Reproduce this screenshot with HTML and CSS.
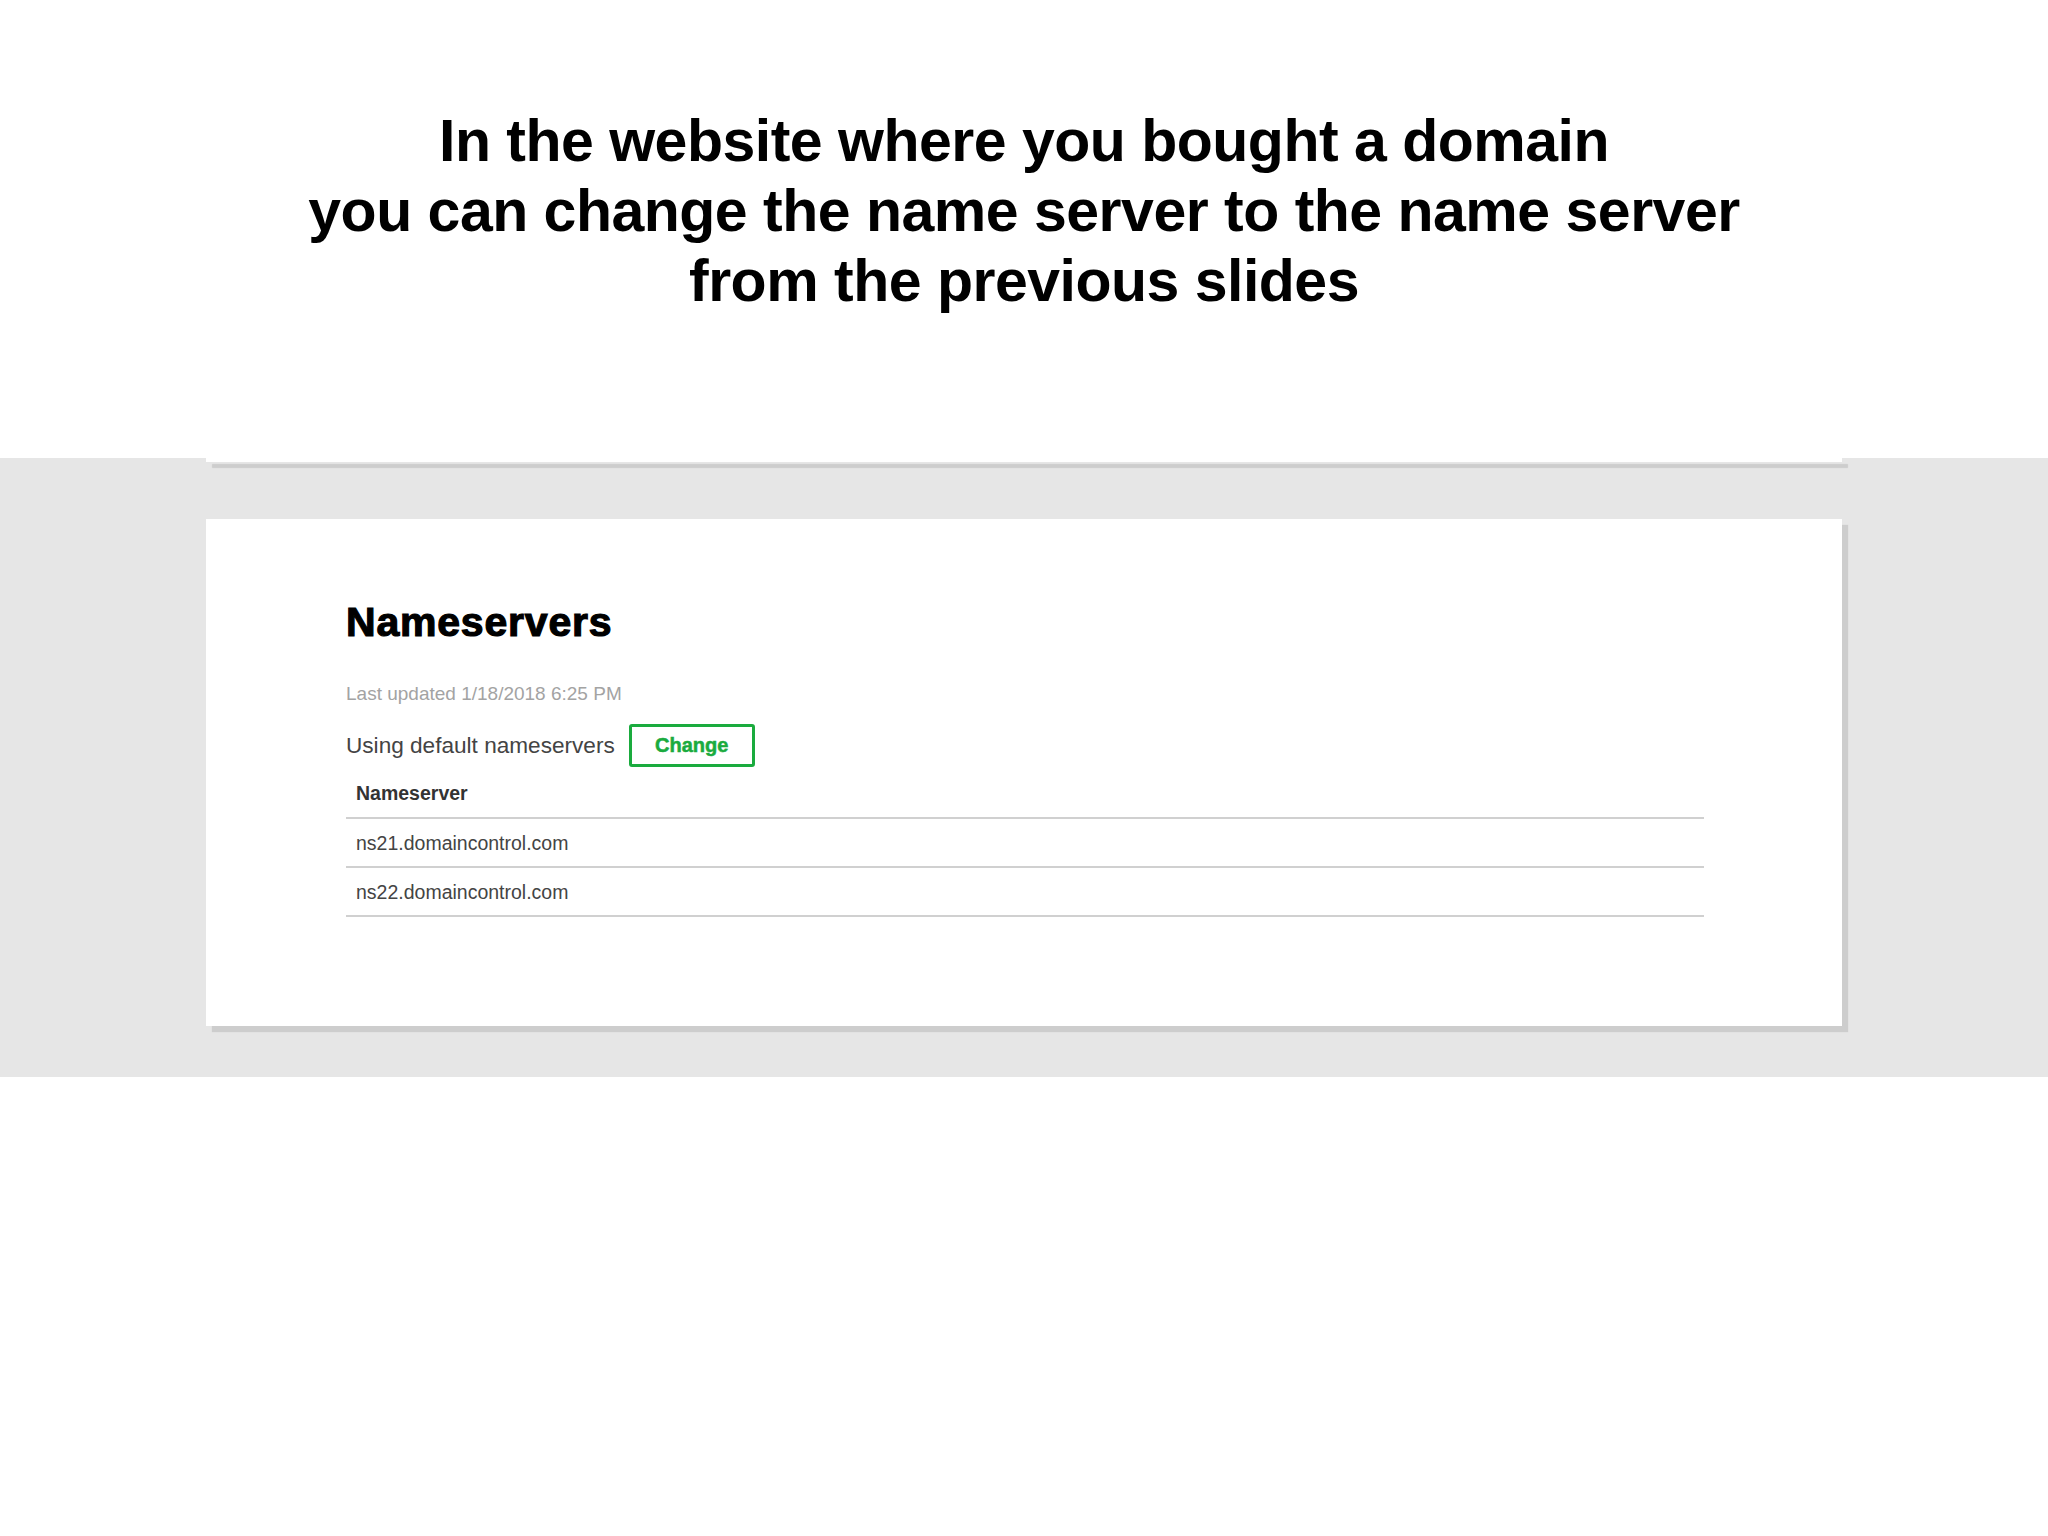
FILE: index.html
```html
<!DOCTYPE html>
<html lang="en">
<head>
  <meta charset="UTF-8">
  <title>Nameservers</title>
  <meta name="viewport" content="width=device-width, initial-scale=1">
  <link rel="stylesheet" href="styles.css">
</head>
<body>
  <h1 class="slide-title">In the website where you bought a domain<br>you can change the name server to the name server<br>from the previous slides</h1>

  <div class="shot">
    <div class="panel panel-edge"></div>
    <section class="panel">
      <h2>Nameservers</h2>
      <p class="updated">Last updated 1/18/2018 6:25 PM</p>
      <div class="ns-mode">
        <span>Using default nameservers</span>
        <button class="change-btn">Change</button>
      </div>
      <!-- current nameservers -->
      <table class="ns-table">
        <thead>
          <tr><th>Nameserver</th></tr>
        </thead>
        <tbody>
          <tr><td>ns21.domaincontrol.com</td></tr>
          <tr><td>ns22.domaincontrol.com</td></tr>
        </tbody>
      </table>
    </section>
  </div>
</body>
</html>
```

FILE: styles.css
```css
* { box-sizing: border-box; margin: 0; padding: 0; }
body { background: #fff; font-family: 'Liberation Sans', Arial, sans-serif; color: #000; }

.slide-title { padding-top: 106px; text-align: center; font-size: 59px; line-height: 70px; font-weight: bold; letter-spacing: -0.5px; color: #000; }

.shot { margin-top: 142px; background: #e6e6e6; padding: 0 0 51px 206px; }
.panel { width: 1636px; background: #fff; box-shadow: 6px 6px 1px #cdcdcd; }
.panel-edge { height: 4px; margin-bottom: 57px; }

section.panel { padding: 78px 138px 109px 140px; }
.panel h2 { font-size: 41px; line-height: 50px; font-weight: bold; letter-spacing: 0.8px; color: #000; -webkit-text-stroke: 1.2px #000; }
.updated { margin-top: 35px; font-size: 19px; line-height: 24px; color: #a3a3a3; }

.ns-mode { display: flex; align-items: center; gap: 14px; margin-top: 18px; font-size: 22.6px; color: #444; }
.change-btn { width: 126px; height: 43px; border: 3px solid #1aab3e; border-radius: 3px; background: #fff; color: #1aab3e; font-family: 'Liberation Sans', Arial, sans-serif; font-size: 20px; font-weight: bold; -webkit-text-stroke: 0.5px #1aab3e; cursor: pointer; }

.ns-table { width: 100%; border-collapse: collapse; font-size: 19.5px; line-height: 24px; }
.ns-table th { text-align: left; padding: 14px 10px 12px; color: #333; font-weight: bold; border-bottom: 2px solid #d0d0d0; }
.ns-table td { padding: 12px 10px 11px; color: #444; border-bottom: 2px solid #d0d0d0; }
```
